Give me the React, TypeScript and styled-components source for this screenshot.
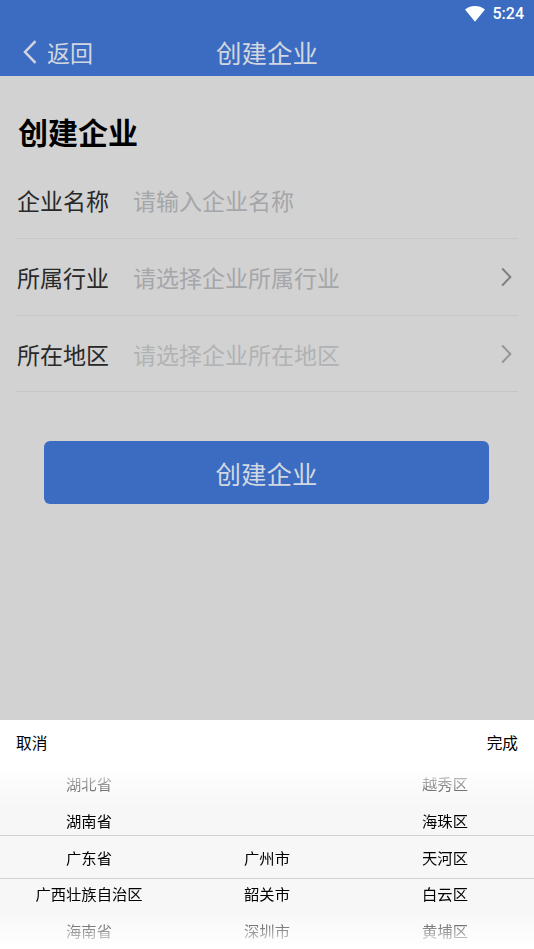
import React from 'react';
import styled, { createGlobalStyle } from 'styled-components';

const GlobalStyle = createGlobalStyle`
  *, *::before, *::after { box-sizing: border-box; }
  body { margin: 0; background: #d2d2d2; }
  button { border: 0; padding: 0; margin: 0; background: none; font: inherit; }
`;

const Screen = styled.div`
  width: 534px;
  height: 949px;
  overflow: hidden;
  display: flex;
  flex-direction: column;
  background: #d2d2d2;
  font-family: "Noto Sans CJK SC", sans-serif;
`;

const StatusBar = styled.div`
  height: 28px;
  flex: none;
  display: flex;
  align-items: center;
  justify-content: flex-end;
  gap: 8px;
  padding-right: 10px;
  background: #3b6cc1;
  color: #fff;
`;

const Clock = styled.span`
  font: 500 16px/28px Roboto, sans-serif;
`;

const Header = styled.header`
  height: 48px;
  flex: none;
  display: grid;
  grid-template-columns: 1fr auto 1fr;
  align-items: center;
  background: #3b6cc1;
  color: #d2d6df;
`;

const BackButton = styled.button`
  display: flex;
  align-items: center;
  gap: 10px;
  padding-left: 23px;
  color: inherit;
  font-size: 23px;
  line-height: 48px;
`;

const HeaderTitle = styled.h1`
  margin: 0;
  font-size: 25.5px;
  font-weight: 400;
  line-height: 48px;
`;

const Main = styled.main`
  flex: 1;
  padding: 33px 16px 0;
`;

const PageTitle = styled.h2`
  margin: 0 0 9px 2px;
  font-size: 30px;
  font-weight: 700;
  line-height: 44px;
  color: #000;
`;

const Field = styled.div<{ $height: number }>`
  height: ${({ $height }) => $height}px;
  display: flex;
  align-items: center;
  padding: 0 6px 0 1px;
  border-bottom: 1px solid #c6c6c6;
  font-size: 23px;
`;

const Label = styled.span`
  width: 116px;
  color: #292929;
`;

const Placeholder = styled.span<{ $faint?: boolean }>`
  flex: 1;
  color: ${({ $faint }) => ($faint ? '#b1b2b4' : '#a5a6a9')};
`;

const SubmitButton = styled.button`
  display: block;
  width: 445px;
  height: 63px;
  margin: 49px 0 0 28px;
  border-radius: 6px;
  background: #3b6cc1;
  color: #d2d8e3;
  font-size: 25.5px;
  line-height: 63px;
`;

const Sheet = styled.section`
  height: 229px;
  flex: none;
  display: flex;
  flex-direction: column;
  background: #fff;
`;

const SheetActions = styled.div`
  height: 45px;
  flex: none;
  display: flex;
  align-items: center;
  justify-content: space-between;
  padding: 0 16px;
  color: #4380e6;
  font-size: 15.7px;
`;

const Picker = styled.div`
  position: relative;
  height: 184px;
  display: grid;
  grid-template-columns: repeat(3, 1fr);
  background: linear-gradient(#fff, #f7f7f7 23%, #f7f7f7 78%, #fff);
`;

const Selection = styled.div`
  position: absolute;
  top: 70px;
  left: 0;
  right: 0;
  height: 44px;
  border: solid #d1d1d1;
  border-width: 1px 0;
`;

const Wheel = styled.ul`
  margin: 0;
  padding: 0;
  list-style: none;
  display: grid;
  grid-template-rows: repeat(5, 36.8px);
  mask-image: linear-gradient(transparent 0, rgba(0, 0, 0, .5) 24px, #000 46px, #000 140px, rgba(0, 0, 0, .5) 162px, transparent 184px);
`;

const Option = styled.li`
  text-align: center;
  font-size: 15.3px;
  line-height: 36.8px;
  color: #000;
`;

function Chevron({ color }: { color: string }) {
  return (
    <svg width="11" height="20" viewBox="0 0 11 20" fill="none">
      <path d="M1.2 1.5 9.4 10l-8.2 8.5" stroke={color} strokeWidth="1.9" />
    </svg>
  );
}

const fields = [
  { label: '企业名称', hint: '请输入企业名称', height: 77 },
  { label: '所属行业', hint: '请选择企业所属行业', height: 77, arrow: '#7d7d7d' },
  { label: '所在地区', hint: '请选择企业所在地区', height: 76, arrow: '#949494', faint: true },
];

const wheels = [
  ['湖北省', '湖南省', '广东省', '广西壮族自治区', '海南省'],
  ['', '', '广州市', '韶关市', '深圳市'],
  ['越秀区', '海珠区', '天河区', '白云区', '黄埔区'],
];

export default function App() {
  return (
    <Screen>
      <GlobalStyle />
      <StatusBar>
        <svg width="20" height="16" viewBox="0 0 20 16" fill="#fff">
          <path d="M0 3.5C6-1.1 14-1.1 20 3.5L10 15.8Z" />
        </svg>
        <Clock>5:24</Clock>
      </StatusBar>
      <Header>
        <BackButton>
          <svg width="14" height="24" viewBox="0 0 14 24" fill="none">
            <path d="M12.5 1.2 2 12l10.5 10.8" stroke="#d2d6df" strokeWidth="2.5" />
          </svg>
          返回
        </BackButton>
        <HeaderTitle>创建企业</HeaderTitle>
      </Header>
      <Main>
        <PageTitle>创建企业</PageTitle>
        {fields.map((f) => (
          <Field key={f.label} $height={f.height}>
            <Label>{f.label}</Label>
            <Placeholder $faint={f.faint}>{f.hint}</Placeholder>
            {f.arrow && <Chevron color={f.arrow} />}
          </Field>
        ))}
        <SubmitButton>创建企业</SubmitButton>
      </Main>
      <Sheet>
        <SheetActions>
          <button>取消</button>
          <button>完成</button>
        </SheetActions>
        <Picker>
          {wheels.map((options, i) => (
            <Wheel key={i}>
              {options.map((name, j) => (
                <Option key={j}>{name}</Option>
              ))}
            </Wheel>
          ))}
          <Selection />
        </Picker>
      </Sheet>
    </Screen>
  );
}
